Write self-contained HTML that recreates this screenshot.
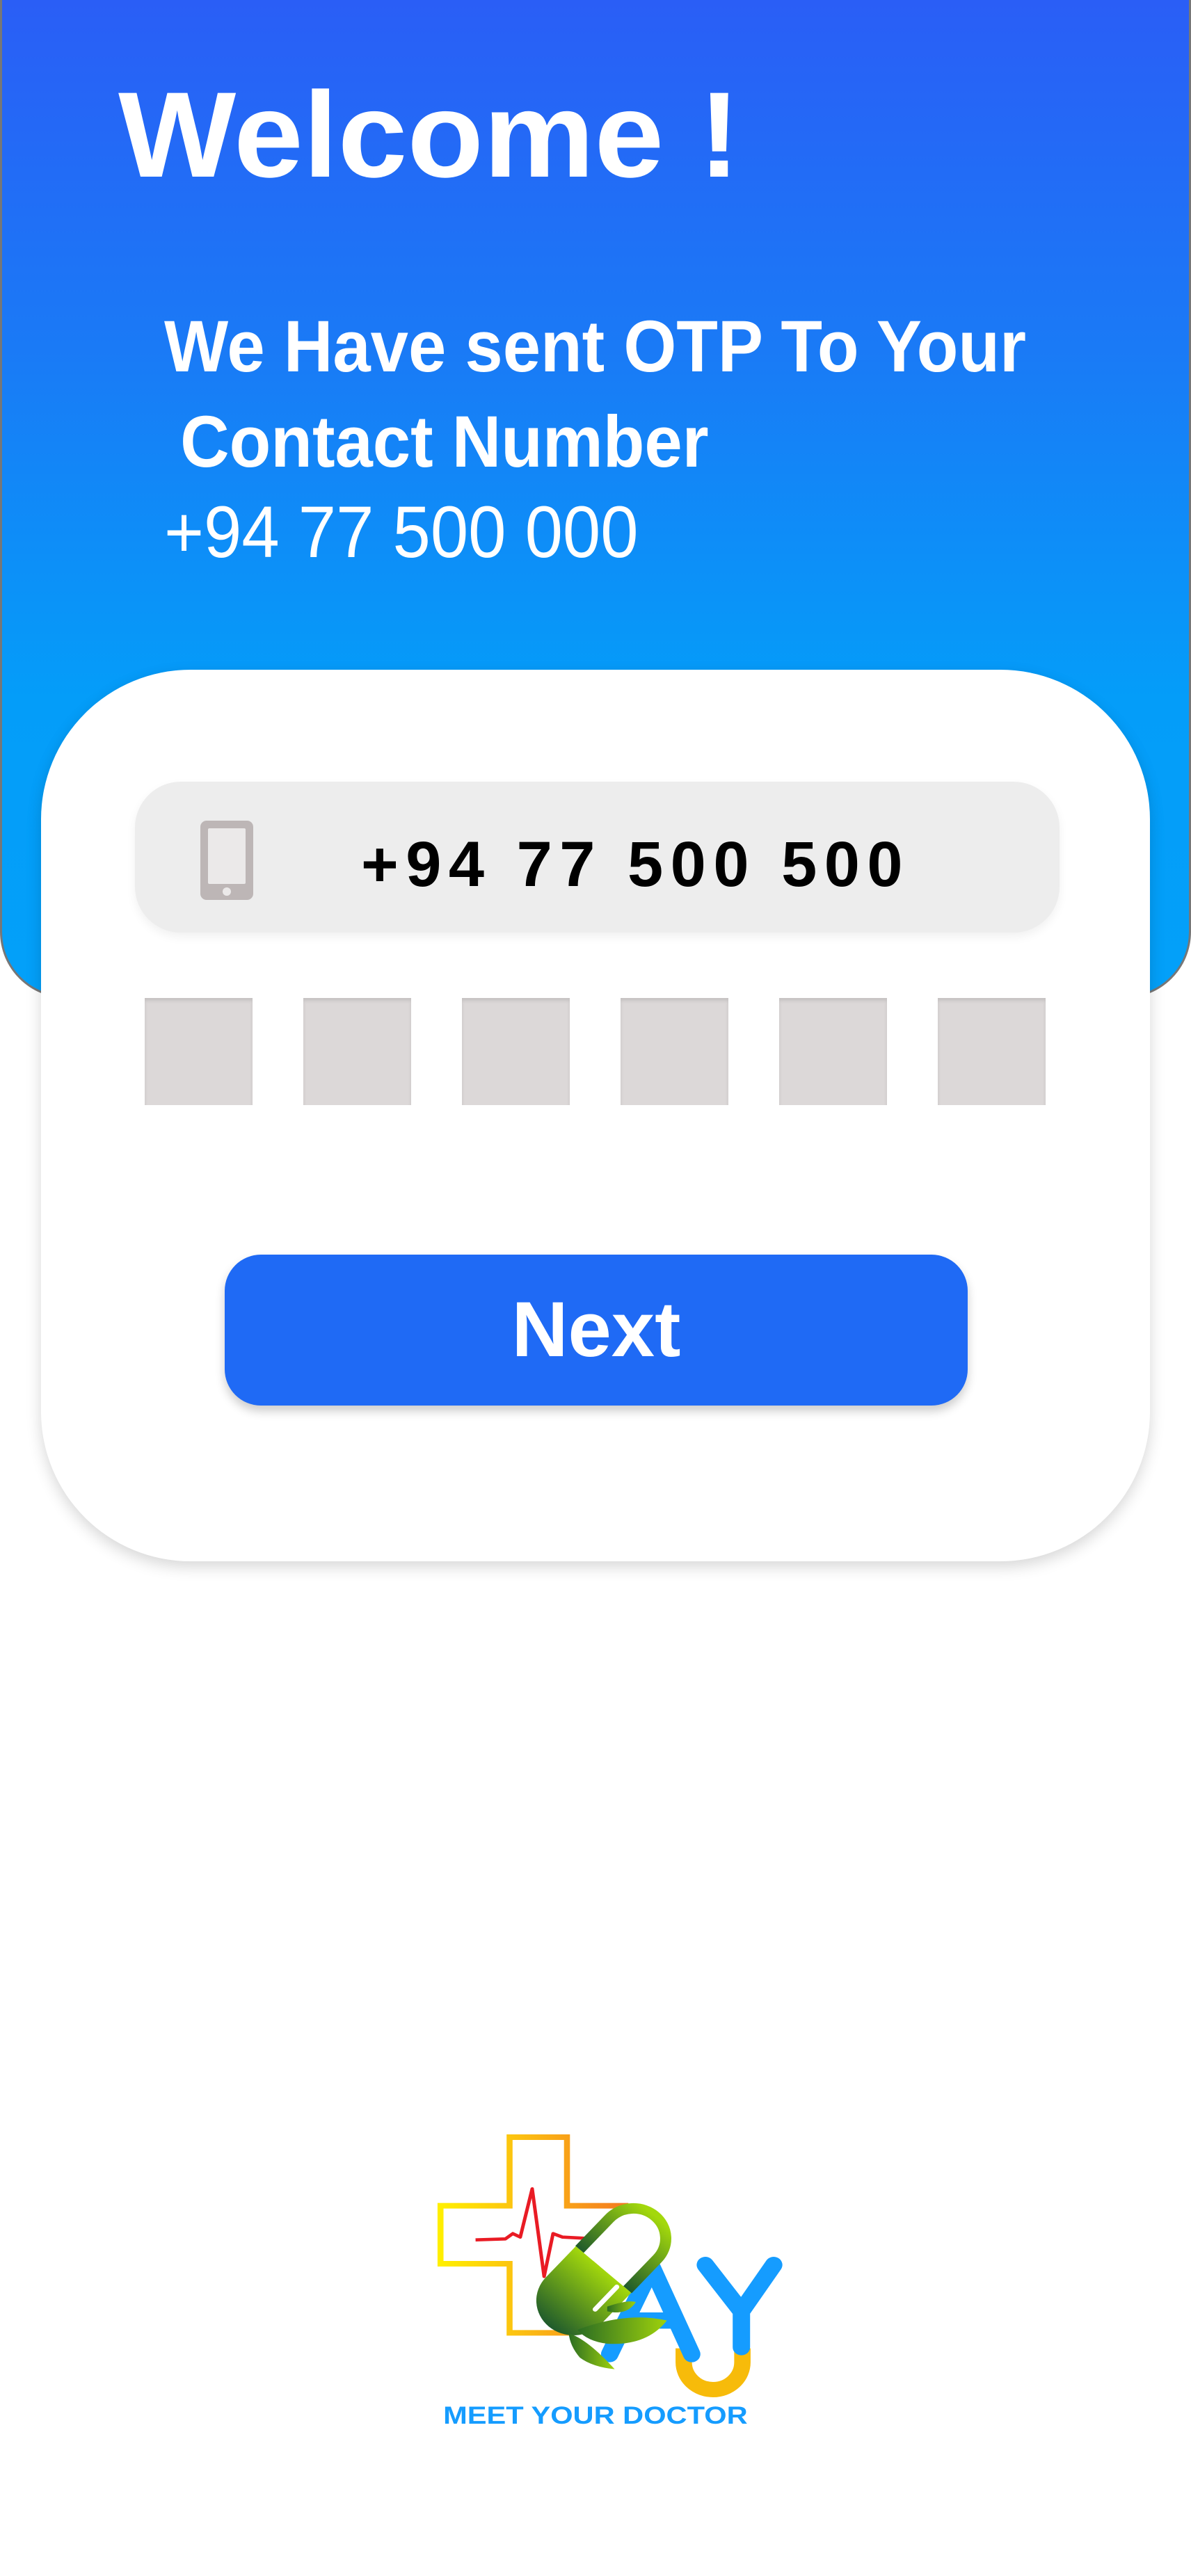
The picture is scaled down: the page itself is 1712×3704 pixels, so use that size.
<!DOCTYPE html>
<html><head><meta charset="utf-8"><style>
*{margin:0;padding:0;box-sizing:border-box}
html,body{width:1712px;height:3704px;background:#fff;overflow:hidden;position:relative;font-family:"Liberation Sans",Arial,sans-serif}
.hdr{position:absolute;left:0;top:0;width:1712px;height:1435px;background:linear-gradient(180deg,#2a5ef6 0%,#1a7af6 35%,#049df9 70%,#03a0f9 100%);border:3px solid #777;border-top:none;border-radius:0 0 95px 95px}
.t{position:absolute;color:#fff;white-space:nowrap;line-height:1;transform-origin:left top}
.card{position:absolute;left:59px;top:963px;width:1594px;height:1282px;background:#fff;border-radius:215px;box-shadow:0 8px 22px rgba(0,0,0,.16)}
.field{position:absolute;left:194px;top:1124px;width:1329px;height:217px;background:#ededed;border-radius:66px;box-shadow:0 6px 14px rgba(0,0,0,.06)}
.box{position:absolute;top:1435px;width:155px;height:154px;background:#dcd8d8;box-shadow:inset 0 4px 5px rgba(0,0,0,.1)}
.btn{position:absolute;left:323px;top:1804px;width:1068px;height:217px;background:#1f6af5;border-radius:52px;box-shadow:0 8px 14px rgba(0,0,0,.2)}
</style></head><body>
<div class="hdr"></div>
<div class="t" style="left:170px;top:107px;font-size:175px;font-weight:bold;transform:scaleX(1.025)">Welcome !</div>
<div class="t" style="left:236px;top:446px;font-size:105px;font-weight:bold;transform:scaleX(.93)">We Have sent OTP To Your</div>
<div class="t" style="left:232px;top:583px;font-size:105px;font-weight:bold;transform:scaleX(.93)">&nbsp;Contact Number</div>
<div class="t" style="left:236px;top:713px;font-size:105px;transform:scaleX(.93)">+94 77 500 000</div>

<div class="card"></div>
<div class="field"></div>
<svg style="position:absolute;left:288px;top:1180px" width="76" height="114" viewBox="0 0 76 114">
<rect x="0" y="0" width="76" height="114" rx="9" fill="#bdb6b6"/>
<rect x="11" y="11" width="54" height="80" rx="2" fill="#ebe9e9"/>
<circle cx="38" cy="102" r="6" fill="#ebe9e9"/>
</svg>
<div class="t" style="left:519px;top:1197px;font-size:92px;font-weight:bold;color:#000;letter-spacing:10.5px">+94 77 500 500</div>

<div class="box" style="left:208px"></div>
<div class="box" style="left:436px"></div>
<div class="box" style="left:664px"></div>
<div class="box" style="left:892px"></div>
<div class="box" style="left:1120px"></div>
<div class="box" style="left:1348px"></div>

<div class="btn"></div>
<div class="t" style="left:323px;width:1068px;text-align:center;top:1856px;font-size:112px;font-weight:bold">Next</div>

<svg style="position:absolute;left:580px;top:3030px" width="560" height="480" viewBox="0 0 1568 1440" preserveAspectRatio="none">
<defs>
<linearGradient id="cg" x1="0" x2="1" y1="0" y2="0"><stop offset="0" stop-color="#ffef00"/><stop offset=".5" stop-color="#fbb814"/><stop offset="1" stop-color="#f47a20"/></linearGradient>
<linearGradient id="pg" x1="0" x2="1"><stop offset="0" stop-color="#1f5a2c"/><stop offset="1" stop-color="#a3d80c"/></linearGradient>
<linearGradient id="lg" x1="0" x2="1" y1="0" y2="0"><stop offset="0" stop-color="#2b6d23"/><stop offset="1" stop-color="#9fd20c"/></linearGradient>
</defs>
<path d="M427,129 H658 V425 H893 V675 H658 V973 H427 V675 H149 V425 H427 Z" fill="none" stroke="url(#cg)" stroke-width="24"/>
<polyline points="290,572 410,568 440,545 470,560 518,352 566,730 602,545 640,560 780,568" fill="none" stroke="#e91b24" stroke-width="14" stroke-linejoin="round"/>
<path d="M1128,1040 V1100 A118,118 0 0 0 1364,1100 V1040" fill="none" stroke="#f7bb0a" stroke-width="66"/>
<g stroke="#159cff" stroke-width="70" stroke-linecap="round" fill="none">
<path d="M830,1065 L1000,690 L1160,1065"/><path d="M900,920 H1090"/>
<path d="M1215,680 L1360,880 L1490,680 M1360,880 V1035"/>
</g>
<g transform="translate(805,700) rotate(-48)">
<path d="M0,-130 H180 A130,130 0 0 1 180,130 H0" fill="#fff" stroke="url(#pg)" stroke-width="45"/>
<path d="M0,-150 H-180 A150,150 0 0 0 -180,150 H0 Z" fill="url(#pg)"/>
<rect x="-160" y="80" width="150" height="20" rx="10" fill="#fff"/>
</g>
<path d="M700,960 Q900,880 1060,920 Q980,1030 820,1020 Q740,1010 700,960Z" fill="url(#lg)"/>
<path d="M820,860 Q900,830 935,840 Q900,900 820,880Z" fill="url(#lg)"/>
<path d="M665,975 Q740,1000 850,1130 Q760,1120 710,1080 Q670,1030 665,975Z" fill="url(#lg)"/>
<text x="160" y="1365" font-family="Liberation Sans,Arial,sans-serif" font-weight="bold" font-size="106" fill="#159cff" textLength="1225" lengthAdjust="spacingAndGlyphs">MEET YOUR DOCTOR</text>
</svg>
</body></html>
